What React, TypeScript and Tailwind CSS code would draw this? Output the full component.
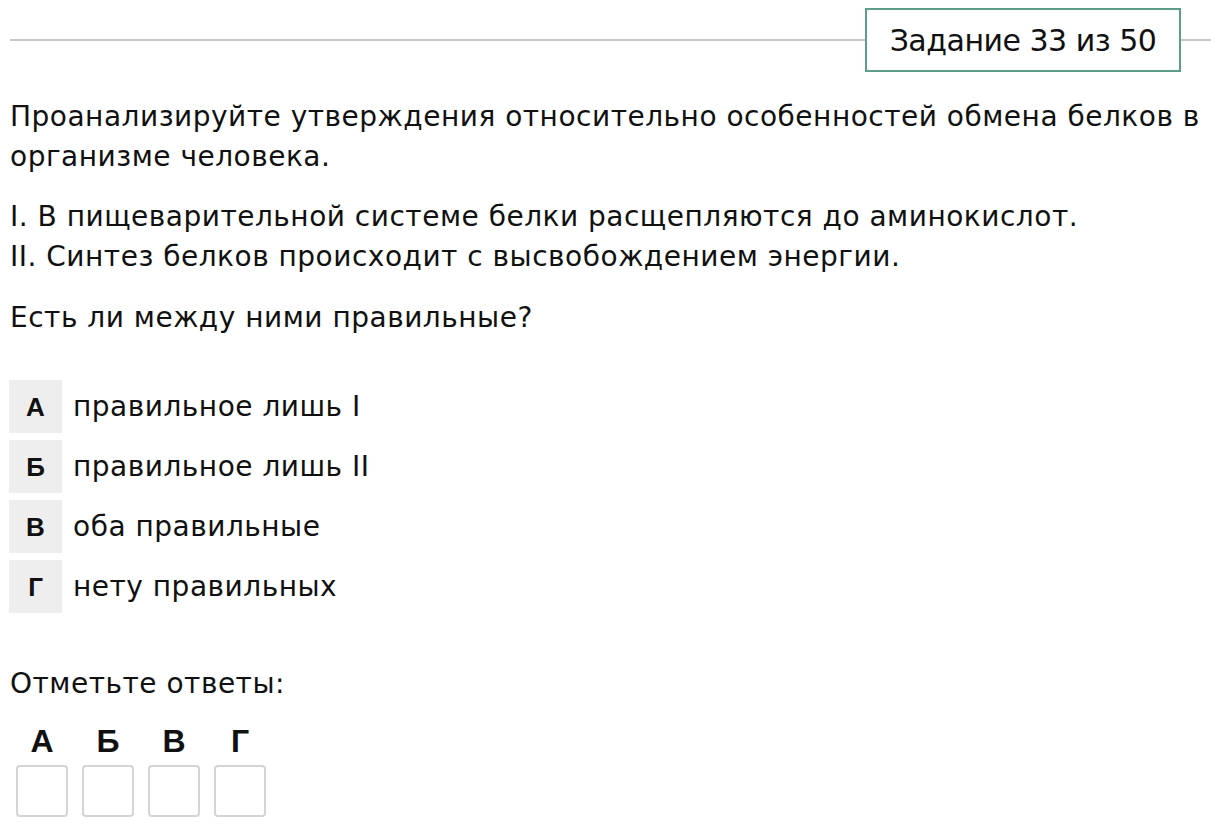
import React from 'react';

const options = [
  { key: 'А', text: 'правильное лишь I' },
  { key: 'Б', text: 'правильное лишь II' },
  { key: 'В', text: 'оба правильные' },
  { key: 'Г', text: 'нету правильных' },
];

export default function App() {
  return (
    <div className="min-h-screen bg-white text-[#111] font-['DejaVu_Sans',sans-serif]">
      {/* шапка с номером задания */}
      <div className="flex items-center pl-[10px] pt-[8px]">
        <div className="flex-1 h-[2px] bg-[#c8c8c8]" />
        <div className="w-[316px] h-[64px] border-2 border-[#5a9e8a] flex items-center justify-center text-[30px] tracking-[-0.5px]">
          Задание 33 из 50
        </div>
        <div className="w-[30px] h-[2px] bg-[#c8c8c8]" />
      </div>

      <div className="px-[10px] text-[28px] leading-[40px] tracking-[0.5px]">
        <p className="mt-[25px]">
          Проанализируйте утверждения относительно особенностей обмена белков в организме человека.
        </p>
        <p className="mt-[20px]">
          I. В пищеварительной системе белки расщепляются до аминокислот.
          <br />
          II. Синтез белков происходит с высвобождением энергии.
        </p>
        <p className="mt-[21px]">Есть ли между ними правильные?</p>

        <div className="mt-[42px] flex flex-col gap-[7px]">
          {options.map((o) => (
            <div key={o.key} className="flex items-center">
              <div className="-ml-[1px] w-[53px] h-[53px] bg-[#eeeeee] flex items-center justify-center font-['Liberation_Sans',sans-serif] font-bold text-[26px] tracking-normal">
                {o.key}
              </div>
              <span className="ml-[11px]">{o.text}</span>
            </div>
          ))}
        </div>

        <p className="mt-[51px]">Отметьте ответы:</p>

        <div className="mt-[21px] ml-[6px] flex gap-[14px]">
          {options.map((o) => (
            <div key={o.key} className="flex flex-col items-center w-[52px]">
              <span className="font-['Liberation_Sans',sans-serif] font-bold text-[32px] leading-[32px] tracking-normal">
                {o.key}
              </span>
              <div className="mt-[8px] w-[52px] h-[52px] border-2 border-[#d4d4d4] rounded-[4px]" />
            </div>
          ))}
        </div>
      </div>
    </div>
  );
}
